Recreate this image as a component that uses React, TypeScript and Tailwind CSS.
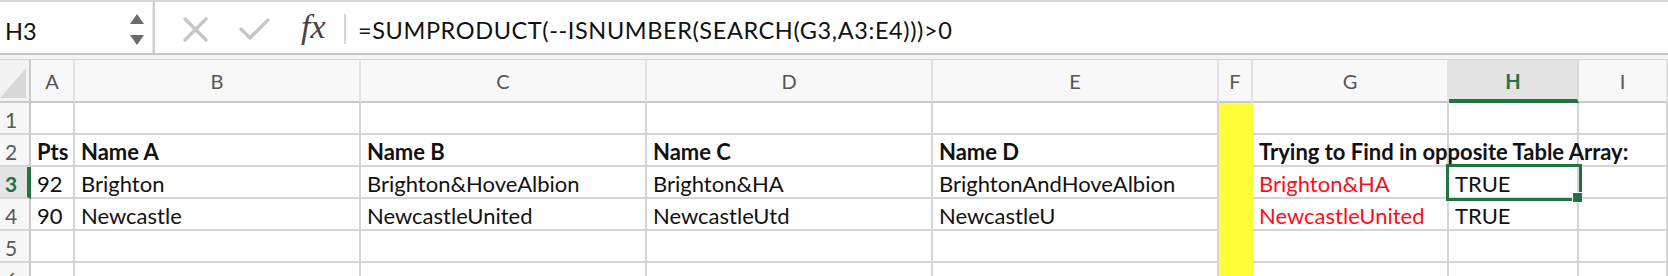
import React from "react";

const cols = ["A", "B", "C", "D", "E", "F", "G", "H", "I"];
const gridCols =
  "grid grid-cols-[31px_44px_286px_286px_286px_286px_34px_196px_130px_1fr]";

type Cell = { t?: string; bold?: boolean; red?: boolean };

const rows: Cell[][] = [
  [],
  [
    { t: "Pts", bold: true },
    { t: "Name A", bold: true },
    { t: "Name B", bold: true },
    { t: "Name C", bold: true },
    { t: "Name D", bold: true },
    {},
    { t: "Trying to Find in opposite Table Array:", bold: true },
  ],
  [
    { t: "92" },
    { t: "Brighton" },
    { t: "Brighton&HoveAlbion" },
    { t: "Brighton&HA" },
    { t: "BrightonAndHoveAlbion" },
    {},
    { t: "Brighton&HA", red: true },
    { t: "TRUE" },
  ],
  [
    { t: "90" },
    { t: "Newcastle" },
    { t: "NewcastleUnited" },
    { t: "NewcastleUtd" },
    { t: "NewcastleU" },
    {},
    { t: "NewcastleUnited", red: true },
    { t: "TRUE" },
  ],
  [],
  [],
];

export default function App() {
  return (
    <div
      className="w-[1668px] h-[276px] overflow-hidden bg-white text-black"
      style={{ fontFamily: "Lato, 'Liberation Sans', sans-serif" }}
    >
      {/* top strip */}
      <div className="h-[2px] bg-[#d8d8d8]" />
      {/* formula bar */}
      <div className="flex h-[51px]">
        <div className="relative w-[152px] shrink-0">
          <div className="absolute left-[5px] top-[18px] text-[23.5px] leading-none text-[#111]">
            H3
          </div>
          <svg
            className="absolute left-[128px] top-[11px]"
            width="18"
            height="34"
            viewBox="0 0 18 34"
          >
            <polygon points="2,11 9,1 16,11" fill="#6b6b6b" />
            <polygon points="2,22 16,22 9,32" fill="#6b6b6b" />
          </svg>
        </div>
        <div className="w-[1px] bg-[#e6e6e6]" />
        <div className="w-[2px] bg-[#cfcfcf]" />
        <div className="relative w-[193px] shrink-0">
          <svg
            className="absolute left-[28px] top-[15px]"
            width="26"
            height="26"
            viewBox="0 0 26 26"
          >
            <path
              d="M2 2 L23 23 M23 2 L2 23"
              stroke="#c6c6c6"
              strokeWidth="3.2"
              strokeLinecap="round"
              fill="none"
            />
          </svg>
          <svg
            className="absolute left-[84px] top-[15px]"
            width="32"
            height="26"
            viewBox="0 0 32 26"
          >
            <path
              d="M2 12 L11 21 L29 3"
              stroke="#c6c6c6"
              strokeWidth="3.4"
              strokeLinecap="round"
              strokeLinejoin="round"
              fill="none"
            />
          </svg>
          <div
            className="absolute left-[146px] top-[8px] text-[34px] italic leading-none text-[#444]"
            style={{ fontFamily: "'Liberation Serif', serif" }}
          >
            fx
          </div>
          <div className="absolute left-[189px] top-[12px] h-[30px] w-[2px] bg-[#d6d6d6]" />
        </div>
        <div className="flex-1 pl-[10px] pt-[17px]">
          <div className="text-[23.5px] leading-none tracking-[0.6px] whitespace-nowrap text-[#111]">
            =SUMPRODUCT(--ISNUMBER(SEARCH(G3,A3:E4)))&gt;0
          </div>
        </div>
      </div>
      <div className="h-[2px] bg-[#c6c6c6]" />
      <div className="h-[4px] bg-[#f4f4f4]" />
      <div className="h-[1px] bg-[#d4d4d4]" />

      {/* column headers */}
      <div className={`${gridCols} h-[43px]`}>
        <div className="relative box-border border-r-2 border-b-2 border-[#c9c9c9] bg-[#f3f3f3]">
          <svg
            className="absolute left-0 top-[7px]"
            width="27"
            height="32"
            viewBox="0 0 27 32"
          >
            <polygon points="26,1 26,31 0,31" fill="#d8d8d8" />
          </svg>
        </div>
        {cols.map((c) => {
          const sel = c === "H";
          return (
            <div
              key={c}
              className={
                sel
                  ? "box-border flex items-center justify-center border-r-2 border-b-[4px] border-r-[#d9d9d9] border-b-[#217346] bg-[#e3e3e3] pt-[2px] text-[20px] font-bold text-[#217346]"
                  : "box-border flex items-center justify-center border-r-2 border-b-2 border-r-[#e2e2e2] border-b-[#c9c9c9] bg-[#f8f8f8] text-[20px] text-[#555]"
              }
            >
              {c}
            </div>
          );
        })}
      </div>

      {/* rows */}
      {rows.map((r, ri) => {
        const rowNum = ri + 1;
        const selRow = rowNum === 3;
        return (
          <div key={ri} className={`${gridCols} h-[32px]`}>
            <div
              className={
                selRow
                  ? "box-border border-r-[4px] border-b-2 border-r-[#217346] border-b-[#d6d6d6] bg-[#e4e4e4] pl-[5px] pt-[6px] text-[21px] font-bold leading-none text-[#217346]"
                  : "box-border border-r-2 border-b-2 border-r-[#c9c9c9] border-b-[#d6d6d6] bg-[#f7f7f7] pl-[5px] pt-[6px] text-[21px] leading-none text-[#595959]"
              }
            >
              {rowNum}
            </div>
            {cols.map((c, ci) => {
              const cell = r[ci] || {};
              if (c === "F") {
                return <div key={c} className="-ml-[1px] bg-[#ffff38]" />;
              }
              const isSel = rowNum === 3 && c === "H";
              return (
                <div
                  key={c}
                  className={`relative box-border border-r-2 border-b-2 border-[#d6d6d6] pl-[6px] pt-[6px] text-[22px] leading-none whitespace-nowrap ${
                    cell.bold ? "font-bold" : ""
                  } ${cell.red ? "text-[#fb0d1b]" : "text-[#111]"} ${
                    isSel ? "z-20" : c === "G" || c === "E" ? "z-10" : ""
                  }`}
                >
                  {cell.t}
                  {isSel && (
                    <>
                      <div className="pointer-events-none absolute -left-[3px] -top-[3px] h-[37px] w-[136px] border-[3px] border-[#217346]" />
                      <div className="absolute -right-[6px] -bottom-[6px] h-[11px] w-[11px] border border-white bg-[#217346]" />
                    </>
                  )}
                </div>
              );
            })}
          </div>
        );
      })}
    </div>
  );
}
